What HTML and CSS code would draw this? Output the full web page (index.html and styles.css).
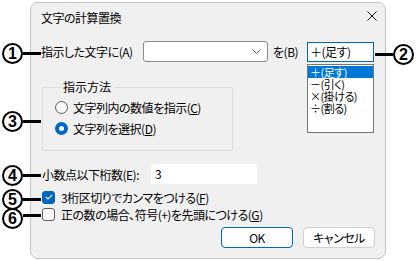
FILE: index.html
```html
<!DOCTYPE html>
<html lang="ja">
<head>
    <meta charset="UTF-8">
    <title>文字の計算置換</title>
    <link rel="stylesheet" href="styles.css">
</head>
<body>
    <div class="page">
        <div class="dialog">
            <div class="titlebar">
                <span class="title">文字の計算置換</span>
                <svg class="close" width="10" height="10" viewBox="0 0 10 10">
                    <path d="M0.5 0.5 L9.5 9.5 M9.5 0.5 L0.5 9.5" stroke="#1a1a1a" stroke-width="1" fill="none"/>
                </svg>
            </div>

            <div class="content">
                <div class="row">
                    <span class="label-target">指示した文字に(A)</span>
                    <div class="combo">
                        <svg class="chevron" width="9" height="5" viewBox="0 0 9 5">
                            <path d="M0.5 0.5 L4.5 4.5 L8.5 0.5" stroke="#606060" stroke-width="1" fill="none"/>
                        </svg>
                    </div>
                    <span class="label-op">を(B)</span>
                    <div class="op-box">
                        <div class="op-select">＋(足す)</div>
                        <ul class="op-list">
                            <li class="selected">＋(足す)</li>
                            <li>－(引く)</li>
                            <li>×(掛ける)</li>
                            <li>÷(割る)</li>
                        </ul>
                    </div>
                </div>

                <fieldset class="group">
                    <legend>指示方法</legend>
                    <div class="radio-row">
                        <span class="radio"></span>
                        <span>文字列内の数値を指示(<u>C</u>)</span>
                    </div>
                    <div class="radio-row">
                        <span class="radio checked"></span>
                        <span>文字列を選択(<u>D</u>)</span>
                    </div>
                </fieldset>

                <div class="row row-digits">
                    <span class="label-digits">小数点以下桁数(E):</span>
                    <div class="text-input">3</div>
                </div>

                <div class="check-row">
                    <span class="check checked">
                        <svg width="8" height="6" viewBox="0 0 8 6">
                            <path d="M0.8 3 L3 5 L7.2 0.8" stroke="#fff" stroke-width="1.1" fill="none"/>
                        </svg>
                    </span>
                    <span>3桁区切りでカンマをつける(<u>F</u>)</span>
                </div>
                <div class="check-row check-row-last">
                    <span class="check"></span>
                    <span>正の数の場合、符号(+)を先頭につける(<u>G</u>)</span>
                </div>

                <div class="buttons">
                    <button class="btn btn-default">OK</button>
                    <button class="btn">キャンセル</button>
                </div>
            </div>
        </div>

        <!-- annotation callouts -->
        <div class="callout callout-1"><span class="num">1</span><span class="line"></span></div>
        <div class="callout callout-2"><span class="line"></span><span class="num">2</span></div>
        <div class="callout callout-3"><span class="num">3</span><span class="line"></span></div>
        <div class="callout callout-4"><span class="num">4</span><span class="line"></span></div>
        <div class="callout callout-5"><span class="num">5</span><span class="line"></span></div>
        <div class="callout callout-6"><span class="num">6</span><span class="line"></span></div>
    </div>
</body>
</html>
```

FILE: styles.css
```css
body {
    margin: 0;
    background: #fff;
    font-family: "Noto Sans CJK JP", "Liberation Sans", sans-serif;
    font-size: 12px;
    font-feature-settings: "palt";
    letter-spacing: -0.5px;
    color: #000;
}
.page {
    position: relative;
    width: 418px;
    height: 261px;
}
.dialog {
    margin-left: 30px;
    margin-top: 2px;
    width: 354px;
    height: 255px;
    background: #f0f0f0;
    border: 1px solid #c4c4c4;
    border-radius: 8px;
}
.titlebar {
    height: 30px;
    display: flex;
    align-items: center;
    justify-content: space-between;
    padding: 0 8px 0 10px;
}
.title {
    margin-top: -2px;
}
.close {
    margin-top: -4px;
}
.content {
    padding: 8px 10px 0 10px;
}
.row {
    display: flex;
    align-items: center;
    height: 21px;
}
.label-target {
    width: 102px;
}
.combo {
    width: 123px;
    height: 19px;
    background: #fff;
    border: 1px solid #8c8c8c;
    border-radius: 3px;
    display: flex;
    align-items: center;
    justify-content: flex-end;
}
.chevron {
    margin-right: 6px;
}
.label-op {
    margin-left: 5px;
    width: 34px;
}
.op-box {
    position: relative;
}
.op-select {
    width: 63px;
    height: 18px;
    line-height: 18px;
    padding-left: 2px;
    background: #fff;
    border: 1px solid #0067c0;
}
.op-list {
    position: absolute;
    left: 0;
    top: 22px;
    width: 65px;
    height: 66px;
    margin: 0;
    padding: 1px 0 0 0;
    list-style: none;
    background: #fff;
    border: 1px solid #767676;
}
.op-list li {
    height: 12px;
    font-size: 11px;
    line-height: 12px;
    padding-left: 2px;
}
.op-list li.selected {
    background: #0078d7;
    color: #fff;
}
.group {
    margin: 17px 0 0 1px;
    padding: 4px 0 14px 12px;
    width: 177px;
    border: 1px solid #dcdcdc;
    border-radius: 2px;
}
.group legend {
    padding: 0 3px;
    margin-left: 5px;
    line-height: 16px;
    letter-spacing: 0;
}
.radio-row {
    display: flex;
    align-items: center;
    height: 16px;
    gap: 5px;
}
.radio-row + .radio-row {
    margin-top: 5px;
}
.radio {
    width: 11px;
    height: 11px;
    border: 1px solid #5c5c5c;
    border-radius: 50%;
    background: #fafafa;
}
.radio.checked {
    width: 5px;
    height: 5px;
    border: 4px solid #0067c0;
    background: #fff;
}
.row-digits {
    margin-top: 13px;
    height: 20px;
    padding-left: 1px;
}
.label-digits {
    width: 109px;
}
.text-input {
    width: 102px;
    height: 20px;
    line-height: 20px;
    padding-left: 4px;
    background: #fff;
}
.check-row {
    display: flex;
    align-items: center;
    height: 16px;
    margin-top: 5px;
    padding-left: 1px;
    gap: 6px;
}
.check-row-last {
    margin-top: 1px;
}
.check {
    width: 11px;
    height: 11px;
    border: 1px solid #5c5c5c;
    border-radius: 3px;
    background: #fafafa;
    display: flex;
    align-items: center;
    justify-content: center;
}
.check.checked {
    background: #0067c0;
    border-color: #0067c0;
}
.buttons {
    display: flex;
    justify-content: flex-end;
    gap: 10px;
    margin-top: 5px;
}
.btn {
    width: 72px;
    height: 21px;
    padding: 0;
    font-family: "Noto Sans CJK JP", "Liberation Sans", sans-serif;
    font-size: 12px;
    font-feature-settings: "palt";
    letter-spacing: -0.5px;
    color: #000;
    background: #fdfdfd;
    border: 1px solid #d0d0d0;
    border-radius: 4px;
}
.btn-default {
    border-color: #0067c0;
}

/* callouts */
.callout {
    position: absolute;
    display: flex;
    align-items: center;
}
.num {
    width: 17px;
    height: 17px;
    border: 2px solid #000;
    border-radius: 50%;
    font-family: "Liberation Sans", sans-serif;
    font-weight: bold;
    font-size: 16px;
    line-height: 17px;
    letter-spacing: 0;
    text-align: center;
}
.line {
    width: 18px;
    height: 3px;
    background: #000;
}
.callout-1 { left: 2px; top: 41px; }
.callout-2 { left: 375px; top: 42px; }
.callout-3 { left: 2px; top: 109px; }
.callout-4 { left: 2px; top: 163px; }
.callout-5 { left: 2px; top: 187px; }
.callout-6 { left: 2px; top: 206px; }
.callout-6 .line { align-self: flex-start; margin-top: 6px; }
```
